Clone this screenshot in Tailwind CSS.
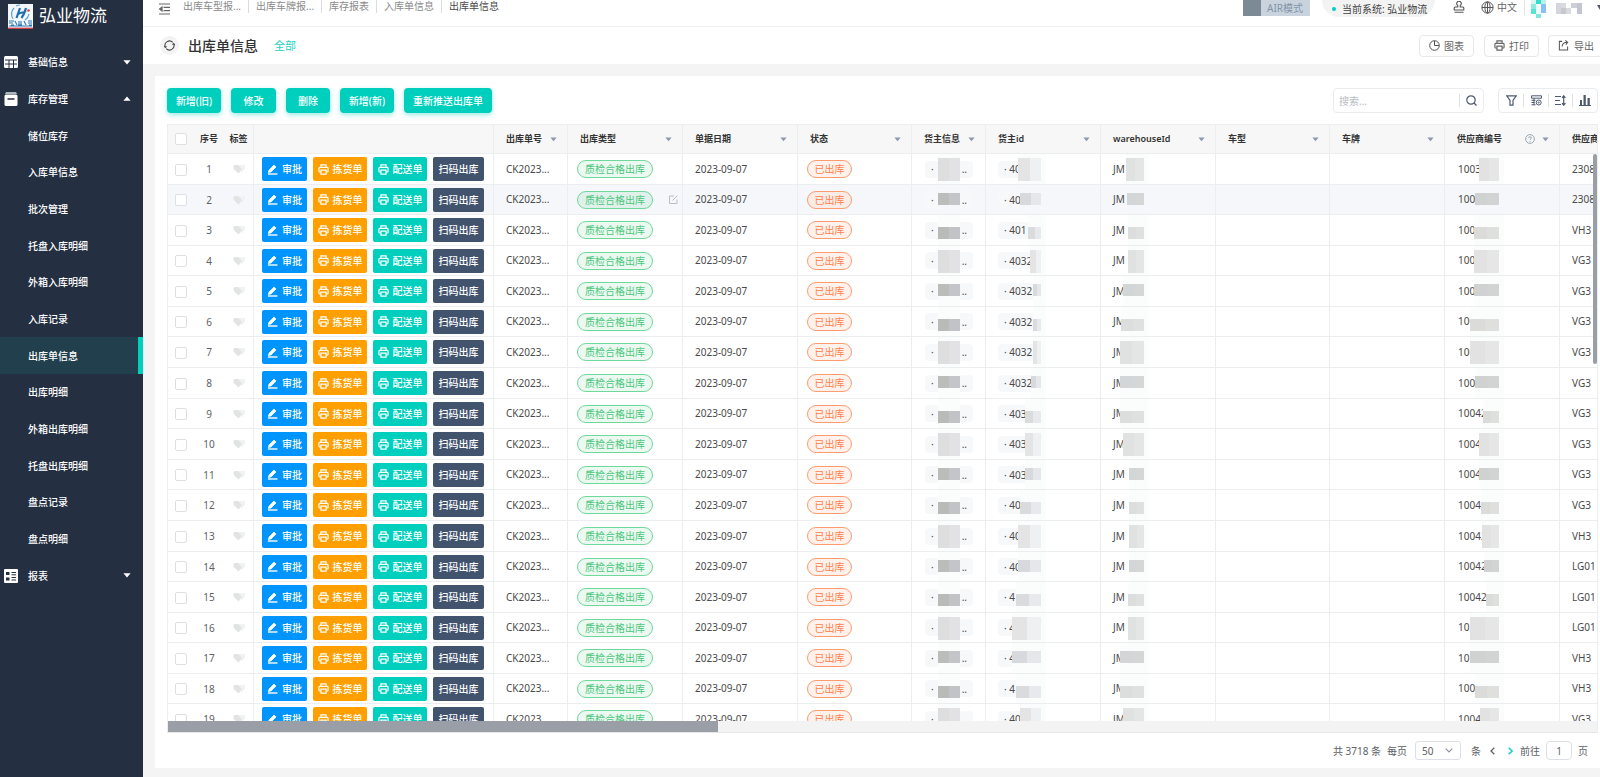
<!DOCTYPE html>
<html lang="zh-CN">
<head>
<meta charset="utf-8">
<title>出库单信息</title>
<script src="https://cdn.jsdelivr.net/npm/@tailwindcss/browser@4"></script>
</head>
<body class="flex h-screen overflow-hidden bg-[#f4f4f4] font-['Noto_Sans','Noto_Sans_CJK_SC',sans-serif] text-[10px] leading-4 text-[#4a4a4a]">

<svg class="hidden">
  <symbol id="pen" viewBox="0 0 12 12"><path d="M1 10.900h10.400" stroke="currentColor" stroke-width="1.500"/><path d="M1.500 9.300l.7-2.700L7.600 1.200l2.200 2L4.400 8.700z" fill="currentColor" stroke="currentColor" stroke-width=".8" stroke-linejoin="round"/></symbol>
  <symbol id="printer" viewBox="0 0 12 12"><path d="M3.200 3.600V1h5.600v2.600M3 8.700H1.900c-.6 0-.9-.4-.9-.9V4.600c0-.6.4-1 .9-1h8.200c.6 0 .9.4.9 1v3.200c0 .5-.3.9-.9.9H9M3.200 6.600h5.600V11H3.200z" fill="none" stroke="currentColor" stroke-width="1.300"/></symbol>
  <symbol id="label" viewBox="0 0 12 10"><path d="M5 1h7v3.500L8.500 8.500z" fill="#f1f2f2"/><path d="M.5 2.500C.5 1.500 1 1 2 1h3l4 4-3.500 4.500L.8 5z" fill="#e2e4e4"/></symbol>
  <symbol id="caret" viewBox="0 0 8 5"><path d="M.4.3h7.200L4 4.600z" fill="currentColor"/></symbol>
</svg>

<aside class="flex w-[143px] shrink-0 flex-col bg-[#242f42] text-white">
  <div class="flex h-[44px] items-start gap-[6px] pl-2 pt-1">
    <svg class="h-[25px] w-[25px]" viewBox="0 0 25 25">
      <rect width="25" height="25" fill="#f4f7fa"/>
      <path d="M6 4A9.500 9.500 0 0 0 5 15M8 2a10 10 0 0 1 4-1M17 16a9 9 0 0 0 4-6" fill="none" stroke="#5aa5d8" stroke-width="1.200"/>
      <path d="M12 4 8.500 14M10 10c3-2 6-1 8-3M18 4c-1 3-2 7-4.500 10" fill="none" stroke="#1b6fb5" stroke-width="2.200"/>
      <circle cx="20.500" cy="6.500" r="1.300" fill="#e0413c"/>
      <path d="M1 17h5M1 19h4M3 21h3M7 17l2 4M11 17v4M13 17v4M10 21h4M16 17l2 4M20 17h4M20 19h4M21 21h3M1 22h23" stroke="#2a78b8" stroke-width="1.100"/>
      <path d="M0 24.300h25" stroke="#c8464a" stroke-width="1.400"/>
    </svg>
    <span class="text-[17px] leading-6">弘业物流</span>
  </div>
  <nav class="grid h-[550px] auto-rows-fr text-[10px] font-medium" id="menu"></nav>
</aside>

<div class="flex min-w-0 flex-1 flex-col">
  <header class="flex h-[27px] shrink-0 items-start border-b border-[#efefef] bg-white pl-4 text-[#8a8a8a]">
    <svg class="mr-[6px] mt-[3px] h-3 w-[11px]" viewBox="0 0 11 12"><path d="M0 1h11M4.500 4.300H11M4.500 7.600H11M0 11h11M3 4v4L.5 6z" fill="#666" stroke="#666" stroke-width="1.200"/></svg>
    <nav class="flex h-[13px] items-center divide-x divide-[#dcdcdc] leading-[13px]">
      <a href="#" class="px-[7px]">出库车型报...</a>
      <a href="#" class="px-[7px]">出库车牌报...</a>
      <a href="#" class="px-[7px]">库存报表</a>
      <a href="#" class="px-[7px]">入库单信息</a>
      <a href="#" class="px-[7px] text-[#4a4a4a]">出库单信息</a>
    </nav>
    <div class="ml-auto flex items-start">
      <button class="flex h-4 w-[67px] items-center bg-[#c9d3dd] leading-[14px] text-[#8194a8]"><span class="mr-[6px] h-4 w-[18px] bg-[#7c8a95]"></span>AIR模式</button>
      <span class="ml-3 flex h-[17px] w-[113px] items-center rounded-b-full bg-[#f3f3f3] pl-[10px] text-[#444]"><i class="mr-[6px] h-1 w-1 rounded-full bg-[#00cfbd]"></i>当前系统: 弘业物流</span>
      <svg class="ml-[18px] mt-[1px] h-3 w-3" viewBox="0 0 12 12" fill="none" stroke="#555" stroke-width="1.100"><path d="M4.800 6V4.500a2.300 2.300 0 1 1 2.400 0V6h2.600c.6 0 1 .4 1 1v2H1.200V7c0-.6.4-1 1-1zM1.500 11.300h9"/></svg>
      <button class="ml-4 flex h-[14px] items-center gap-[3px] leading-[14px] text-[#666]">
        <svg class="h-[13px] w-[13px]" viewBox="0 0 13 13" fill="none" stroke="#555" stroke-width="1"><circle cx="6.500" cy="6.500" r="5.600"/><ellipse cx="6.500" cy="6.500" rx="2.600" ry="5.600"/><path d="M1 6.500h11M6.500 1v11"/></svg>中文</button>
      <span class="ml-[7px] h-[15px] w-px bg-[#e4e4e4]"></span>
      <svg class="ml-[6px] h-[19px] w-[15px]" viewBox="0 0 15 19"><path d="M5 0h5v4H5z" fill="#35dccb"/><path d="M0 4h5v5H0z" fill="#8eeade"/><path d="M0 9h5v5H0z" fill="#56e3d4"/><path d="M10 0h5v4h-5z" fill="#b9efe9"/><path d="M10 4h5v9h-5z" fill="#86c1f3"/><path d="M5 4h5v10H5z" fill="#f2fbfc"/><path d="M5 14h5v4H5z" fill="#7de7dc"/><path d="M0 0h5v4H0z" fill="#d9f6f2"/></svg>
      <svg class="ml-[10px] mt-[3px] h-[11px] w-[26px]" viewBox="0 0 26 11"><path d="M0 0h5v11H0z" fill="#d5d5dc"/><path d="M5 0h5v5H5zM10 5h5v6h-5z" fill="#d9dae0"/><path d="M5 5h5v6H5z" fill="#c6c7cf"/><path d="M15 0h6v5h-6z" fill="#cfd0d7"/><path d="M21 0h5v11h-5z" fill="#c3c5d0"/></svg>
      <svg class="ml-[15px] mt-[5px] h-[5px] w-[3px] text-[#556]" viewBox="0 0 3 5"><path d="M0 0h3v5z" fill="currentColor"/></svg>
    </div>
  </header>

  <div class="flex h-[37px] shrink-0 items-center bg-white pl-[17px]">
    <button aria-label="刷新" class="flex h-[19px] w-[19px] items-center justify-center rounded-full bg-[#f3f3f3]">
      <svg class="h-[11px] w-[11px]" viewBox="0 0 12 12" fill="none" stroke="#444" stroke-width="1.200"><path d="M1.300 7.500A4.900 4.900 0 0 1 9.500 2.600M10.700 4.500A4.900 4.900 0 0 1 2.500 9.400"/><path d="M.3 6.600l1.100 1.600 1.400-1.300M11.700 5.400l-1.100-1.600-1.400 1.300"/></svg>
    </button>
    <h1 class="ml-[9px] text-[14px] font-medium leading-5 text-[#333]">出库单信息</h1>
    <a href="#" class="ml-4 text-[11px] text-[#1fd3c4]">全部</a>
    <div class="ml-auto flex text-[#666]">
      <button class="mr-[10px] flex h-[22px] w-[55px] items-center justify-center gap-1 rounded-sm border border-[#e8e8e8]"><svg class="h-[11px] w-[11px]" viewBox="0 0 11 11" fill="none" stroke="#555"><circle cx="5.500" cy="5.500" r="4.800"/><path d="M5.500 1v4.500H10"/></svg>图表</button>
      <button class="mr-[9px] flex h-[22px] w-[55px] items-center justify-center gap-1 rounded-sm border border-[#e8e8e8]"><svg class="h-[11px] w-[11px]"><use href="#printer"/></svg>打印</button>
      <button class="flex h-[22px] w-[52px] items-center gap-[5px] rounded-l-sm border border-r-0 border-[#e8e8e8] pl-[9px]"><svg class="h-[11px] w-[11px]" viewBox="0 0 12 12" fill="none" stroke="#555" stroke-width="1.100"><path d="M4.500 1.500h-3v9.500h9V7M4.500 7c0-3 2-4.500 5.500-4.500M8 .5l2.500 2L8.500 5"/></svg>导出</button>
    </div>
  </div>

  <main class="mb-[9px] ml-3 mt-3 flex min-h-0 flex-1 flex-col bg-white pl-[12px] pt-3">
    <div class="flex items-center pr-[2px]">
      <div class="flex gap-[10px] font-medium text-white">
        <button class="h-[25px] w-[54px] rounded-sm bg-[#00cfbd] shadow-[0_2px_5px_#00cfbd66]">新增(旧)</button>
        <button class="h-[25px] w-[45px] rounded-sm bg-[#00cfbd] shadow-[0_2px_5px_#00cfbd66]">修改</button>
        <button class="h-[25px] w-[44px] rounded-sm bg-[#00cfbd] shadow-[0_2px_5px_#00cfbd66]">删除</button>
        <button class="h-[25px] w-[54px] rounded-sm bg-[#00cfbd] shadow-[0_2px_5px_#00cfbd66]">新增(新)</button>
        <button class="h-[25px] w-[88px] rounded-sm bg-[#00cfbd] shadow-[0_2px_5px_#00cfbd66]">重新推送出库单</button>
      </div>
      <div class="ml-auto flex h-[25px] w-[151px] items-center rounded-sm border border-[#e9ebef]">
        <input aria-label="搜索" placeholder="搜索..." class="w-0 flex-1 pl-[5px] outline-none placeholder:text-[#b9bcc4]">
        <span class="h-[13px] w-px bg-[#dfe1e5]"></span>
        <button aria-label="查找" class="flex w-[23px] justify-center"><svg class="h-[11px] w-[11px]" viewBox="0 0 11 11" fill="none" stroke="#4d5a70" stroke-width="1.200"><circle cx="5" cy="5" r="4.200"/><path d="M8 8l2.500 2.500"/></svg></button>
      </div>
      <div class="ml-[14px] flex h-[25px] items-center divide-x divide-[#dfe1e5] rounded-sm border border-[#e9ebef]">
        <button aria-label="筛选" class="flex h-[13px] w-[25px] items-center justify-center"><svg class="h-[11px] w-[11px]" viewBox="0 0 11 11" fill="none" stroke="#4d5a70" stroke-width="1.200"><path d="M.8.800h9.400L7 5.500v4.700H4V5.500z"/></svg></button>
        <button aria-label="列设置" class="flex h-[13px] w-[25px] items-center justify-center"><svg class="h-[11px] w-[11px]" viewBox="0 0 11 11" fill="none" stroke="#4d5a70"><path d="M.5.800h10v2.400H.5zM.5 5.300h4M.5 7.500h3M.5 9.800h4M3 3.500v6.500"/><circle cx="7.700" cy="7.500" r="2.500"/><circle cx="7.700" cy="7.500" r=".6"/></svg></button>
        <button aria-label="行高" class="flex h-[13px] w-[24px] items-center justify-center"><svg class="h-[11px] w-[11px]" viewBox="0 0 11 11" fill="none" stroke="#4d5a70"><path d="M0 1.500h6M0 5.500h5M0 9.500h6M8.700 1v9M7 2.800l1.700-2 1.700 2M7 8.200l1.700 2 1.700-2" stroke-width="1.200"/></svg></button>
        <button aria-label="统计" class="flex h-[13px] w-[24px] items-center justify-center"><svg class="h-[11px] w-[12px]" viewBox="0 0 12 11" fill="#4d5a70"><path d="M0 10h12v1H0zM1 5h2v5H1zM4.500 0h2.300v10H4.500zM8.500 3h2.300v7H8.500z"/></svg></button>
      </div>
    </div>

    <section class="mr-[2px] mt-[11px] flex min-h-0 flex-1 flex-col border border-[#ebeef0] border-b-[#e6e6e6]">
      <div class="relative min-h-0 flex-1 overflow-hidden">
        <table class="w-[1507px] table-fixed border-separate border-spacing-0">
          <colgroup><col class="w-[26px]"><col class="w-[30px]"><col class="w-[30px]"><col class="w-[240px]"><col class="w-[74px]"><col class="w-[115px]"><col class="w-[115px]"><col class="w-[114px]"><col class="w-[74px]"><col class="w-[115px]"><col class="w-[115px]"><col class="w-[114px]"><col class="w-[115px]"><col class="w-[115px]"><col class="w-[115px]"></colgroup>
          <thead><tr id="head" class="h-[29px] bg-[#f7f7f7] text-[9px] text-[#333]"></tr></thead>
          <tbody id="rows"></tbody>
        </table>
        <span class="absolute right-0 top-[29px] h-[210px] w-1 rounded-full bg-[#9a9ea7]"></span>
      </div>
      <div class="h-[11px] shrink-0 bg-[#f3f3f3]"><div class="h-[11px] w-[550px] bg-[#9a9ea7]"></div></div>
    </section>

    <footer class="flex h-[35px] shrink-0 items-center justify-end pr-3 text-[#606266]">
      <span>共 3718 条</span>
      <label for="size" class="ml-[6px]">每页</label>
      <span class="relative ml-2 flex items-center">
        <select id="size" class="h-[19px] w-[46px] appearance-none rounded-[3px] border border-[#dcdfe6] pl-[6px]"><option>50</option></select>
        <svg class="absolute right-[8px] h-[5px] w-2" viewBox="0 0 8 5" fill="none" stroke="#8b909a" stroke-width="1.100"><path d="M.7.700 4 4 7.300.700"/></svg>
      </span>
      <span class="ml-[10px]">条</span>
      <button aria-label="上一页" class="ml-[9px]"><svg class="h-2 w-[5px]" viewBox="0 0 5 8" fill="none" stroke="#606266" stroke-width="1.300"><path d="M4.300.700 1 4l3.300 3.300"/></svg></button>
      <button aria-label="下一页" class="ml-[13px]"><svg class="h-2 w-[5px]" viewBox="0 0 5 8" fill="none" stroke="#1fd3c4" stroke-width="1.600"><path d="M.7.700 4 4 .7 7.300"/></svg></button>
      <label for="page" class="ml-[7px]">前往</label>
      <input id="page" value="1" class="ml-[6px] h-[19px] w-[26px] rounded-sm border border-[#dcdfe6] text-center">
      <span class="ml-[6px]">页</span>
    </footer>
  </main>
</div>

<script>
const icons = {
  table: '<svg class="h-[12px] w-[14px]" viewBox="0 0 14 12"><rect width="14" height="12" rx="1.500" fill="#fff"/><path d="M1 4h12M1 8h12M5 4v8M9.500 4v8" stroke="#242f42"/></svg>',
  box: '<svg class="h-[14px] w-[14px]" viewBox="0 0 14 14"><path d="M2 0h10l1 2H1z" fill="#aeb4be"/><rect x=".5" y="2.500" width="13" height="11.500" rx="1.500" fill="#fff"/><path d="M3.500 7h7" stroke="#242f42" stroke-width="1.500"/></svg>',
  report: '<svg class="h-[14px] w-[14px]" viewBox="0 0 14 14"><rect width="14" height="14" rx="1" fill="#fff"/><path d="M2 3h3.500v3H2zM2 8.500h3.500v3H2z" fill="#242f42"/><path d="M7.500 3.500H12M7.500 5.800H12M7.500 8.500H12M7.500 11H12" stroke="#242f42"/></svg>'
};
const menu = [['基础信息','table','down'],['库存管理','box','up'],['储位库存'],['入库单信息'],['批次管理'],['托盘入库明细'],['外箱入库明细'],['入库记录'],['出库单信息'],['出库明细'],['外箱出库明细'],['托盘出库明细'],['盘点记录'],['盘点明细'],['报表','report','down']];
document.getElementById('menu').innerHTML = menu.map(([name, icon, dir], i) => `
  <a href="#" class="flex items-center pl-1 ${i === 8 ? 'border-r-[5px] border-[#00cfbd] bg-[#223f4d]' : 'pr-3'}">
    <span class="mr-[10px] w-[14px]">${icon ? icons[icon] : ''}</span>${name}
    ${dir ? `<svg class="ml-auto h-[5px] w-2 ${dir === 'up' ? 'rotate-180' : ''}"><use href="#caret"/></svg>` : ''}
  </a>`).join('');

const heads = ['', '出库单号','出库类型','单据日期','状态','货主信息','货主id','warehouseId','车型','车牌','供应商编号','供应商名称'];
const line = 'border-b border-[#ebedef]';
document.getElementById('head').innerHTML =
  `<th class="${line} pl-[7px]"><input type="checkbox" aria-label="全选" class="block h-3 w-3 appearance-none rounded-[2px] border border-[#dddfe3] bg-white"></th><th class="${line} font-semibold">序号</th><th class="border-r ${line} font-semibold">标签</th>` +
  heads.map((h, i) => `<th class="border-r ${line} pl-3 pr-[10px] font-semibold"><div class="flex items-center leading-4">
    <span class="whitespace-nowrap">${h}</span>
    ${h === '供应商编号' ? '<svg class="ml-auto mr-[7px] h-[10px] w-[10px] shrink-0" viewBox="0 0 10 10" fill="none" stroke="#9aa7b8"><circle cx="5" cy="5" r="4.400"/><path d="M3.600 4c0-1.700 2.800-1.700 2.800 0 0 .9-1.400 1-1.400 2M5 7v1"/></svg>' : ''}
    ${i ? `<svg class="${h === '供应商编号' ? '' : 'ml-auto'} h-[5px] w-[7px] shrink-0 text-[#8c9aaf]"><use href="#caret"/></svg>` : ''}
  </div></th>`).join('');

// Masked columns: visible prefix and the x offset inside the cell at which the mask starts.
const ids = [['40',32],['40',34],['401',42],['4032',44],['4032',47],['4032',47],['4032',47],['4032',45],['403',39],['403',39],['403',39],['40',34],['40',32],['40',32],['4',30],['4',26],['4',26],['4',30],['40',34]];
const wh = [25,26,27,27,22,20,19,19,19,22,28,28,28,28,27,27,19,19,22];
const codes = [['1003',34],['100',30],['100',29],['100',29],['100',29],['100',25],['100',25],['100',30],['10042',38],['1004',34],['1004',34],['1004',36],['10042',37],['10042',39],['10042',41],['10',25],['10',25],['100',30],['1004',35]];
const names = ['23081','23081','VH3','VG3','VG3','VG3','VG3','VG3','VG3','VG3','VG3','VG3','VH3','LG01','LG01','LG01','VH3','VH3','VG3'];

const band = ['top-[4px] h-[23px]', 'top-[8px] h-[12px]', 'top-[12px] h-[12px]'];
const tones = {
  owner: [['bg-[#dededf]','bg-[#e2e2e4]'],['bg-[#bbbdba]','bg-[#c4c5c9]'],['bg-[#b9bbb8]','bg-[#c2c3c7]']],
  id: [['bg-[#e4e4e5]','bg-[#eff0f2]'],['bg-[#d8d9dc]','bg-[#e6e7eb]'],['bg-[#dadbdd]','bg-[#e8e9ec]']],
  wh: [['bg-[#e0e2e1]','bg-[#e4e6e5]'],['bg-[#d3d6d6]','bg-[#d5d7d7]'],['bg-[#dcdddd]','bg-[#dfe1e0]']],
  code: [['bg-[#e2e2e2]','bg-[#e6e6e6]'],['bg-[#d0d2d2]','bg-[#d2d3d3]'],['bg-[#dbdbda]','bg-[#dfdfde]']]
};
const mask = (kind, i, from, to) => `
  <span class="absolute inset-y-0 ${i === 1 ? 'bg-[#f6f7fa]' : 'bg-[#fbfcfc]'}" style="left:${from}px;width:${to - from + (kind === 'owner' ? 0 : 5)}px">
    <span class="absolute left-0 flex ${band[i % 3]}" style="width:${to - from}px"><i class="flex-1 ${tones[kind][i % 3][0]}"></i><i class="flex-1 ${tones[kind][i % 3][1]}"></i></span>
  </span>`;

const chip = 'flex h-6 items-center justify-center gap-1 rounded-[2px] font-medium text-white';
let out = '';
for (let i = 0; i < 19; i++) {
  const tall = Math.round((i + 1) * 30.58) - Math.round(i * 30.58) === 31;
  const cell = `border-r ${line} relative p-0`;
  out += `<tr class="${tall ? 'h-[31px]' : 'h-[30px]'} ${i === 1 ? 'bg-[#f5f7fa]' : ''}">
    <td class="${line} pl-[7px] pt-px"><input type="checkbox" aria-label="选择第${i + 1}行" class="block h-3 w-3 appearance-none rounded-[2px] border border-[#dddfe3] bg-white"></td>
    <td class="${line} p-0 text-center text-[#606266]">${i + 1}</td>
    <td class="${cell}"><svg class="mx-auto h-[10px] w-3"><use href="#label"/></svg></td>
    <td class="${cell} pl-2"><div class="flex gap-[6px]">
      <button class="${chip} w-[45px] bg-[#0094ff]"><svg class="h-[11px] w-[11px]"><use href="#pen"/></svg>审批</button>
      <button class="${chip} w-[54px] bg-[#ffa000]"><svg class="h-[11px] w-[11px]"><use href="#printer"/></svg>拣货单</button>
      <button class="${chip} w-[54px] bg-[#00cfbd]"><svg class="h-[11px] w-[11px]"><use href="#printer"/></svg>配送单</button>
      <button class="${chip} w-[51px] bg-[#42536e]">扫码出库</button></div></td>
    <td class="${cell} pb-px pl-3">CK2023...</td>
    <td class="${cell} pl-[9px]"><div class="flex items-center justify-between pr-1"><span class="flex h-[18px] w-[76px] items-center justify-center rounded-full border border-[#6fd89b] ${i === 1 ? 'bg-[#e0f1eb]' : 'bg-[#ebf9f1]'} text-[#4cc77c]">质检合格出库</span>
      ${i === 1 ? '<svg class="h-[9px] w-[9px]" viewBox="0 0 9 9" fill="none" stroke="#b9bdc6"><path d="M5 1H.5v7.500H8V4.500M3.500 5.500 8.500.500"/></svg>' : ''}</div></td>
    <td class="${cell} pb-px pl-3">2023-09-07</td>
    <td class="${cell} pl-[9px]"><span class="flex h-[18px] w-[45px] items-center justify-center rounded-full border border-[#ff9c6e] ${i === 1 ? 'bg-[#f9ebe6]' : 'bg-[#fff2ec]'} text-[#ff814d]">已出库</span></td>
    <td class="${cell} pl-[13px]"><span class="flex h-[17px] w-[48px] items-center justify-between rounded-sm bg-[#f7f8fa] px-[6px]"><span>·</span><span>..</span></span>${mask('owner', i, 26, 48)}</td>
    <td class="${cell} pl-3"><span class="flex h-[17px] w-[43px] items-center rounded-sm bg-[#f7f8fa] pl-[6px]">· ${ids[i][0]}</span>${mask('id', i, ids[i][1], 55)}</td>
    <td class="${cell} pb-px pl-3">JM${mask('wh', i, wh[i], 43)}</td>
    <td class="${cell}"></td>
    <td class="${cell}"></td>
    <td class="${cell} pb-px pl-[13px]">${codes[i][0]}${mask('code', i, codes[i][1], 54)}</td>
    <td class="${cell} pb-px pl-3">${names[i]}</td>
  </tr>`;
}
document.getElementById('rows').innerHTML = out;
</script>
</body>
</html>
